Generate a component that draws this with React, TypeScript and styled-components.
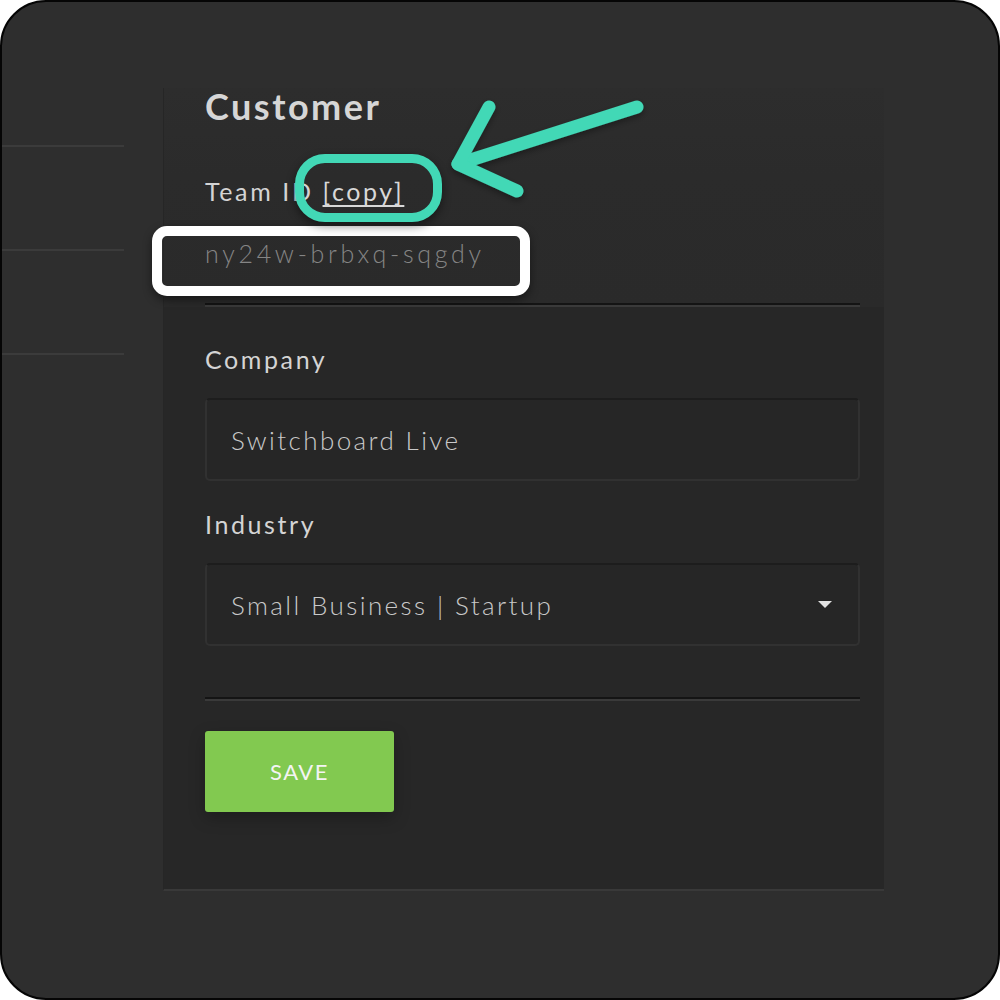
import React from "react";
import styled, { createGlobalStyle } from "styled-components";

const Global = createGlobalStyle`
  html, body { margin: 0; padding: 0; background: #ffffff; }
  body { font-family: Lato, "Open Sans", sans-serif; }
  * { box-sizing: border-box; }
`;

const Page = styled.div`
  position: relative;
  width: 1000px;
  height: 1000px;
  background: #ffffff;
  overflow: hidden;
`;

const Frame = styled.div`
  width: 1000px;
  height: 1000px;
  border: 2px solid #050505;
  border-radius: 46px;
  background: #2e2e2e;
  overflow: hidden;
  display: flex;
  align-items: flex-start;
`;

const Sidebar = styled.nav`
  width: 122px;
  flex: none;
  padding-top: 143px;
  display: flex;
  flex-direction: column;
`;

const SideItem = styled.div`
  height: 104px;
  border-top: 2px solid #3b3b3b;
`;

const Panel = styled.section`
  width: 721px;
  margin-left: 39px;
  margin-top: 86px;
  flex: none;
  display: flex;
  flex-direction: column;
  border-left: 1px solid #262626;
  border-bottom: 2px solid #393939;
`;

const PanelHead = styled.div`
  background: linear-gradient(180deg, #2d2d2d 0%, #2b2b2b 40%, #2a2a2a 100%);
  padding: 0 24px 0 41px;
  display: flex;
  flex-direction: column;
`;

const PanelBody = styled.div`
  background: #272727;
  padding: 40px 24px 77px 41px;
  display: flex;
  flex-direction: column;
`;

const Heading = styled.h1`
  margin: 0;
  font-family: Lato, sans-serif;
  font-weight: 700;
  font-size: 36px;
  line-height: 36px;
  letter-spacing: 2.5px;
  color: #d6d6d6;
`;

const Label = styled.label<{ $top: number }>`
  display: block;
  margin-top: ${(p) => p.$top}px;
  font-family: Lato, sans-serif;
  font-weight: 400;
  font-size: 25px;
  line-height: 25px;
  letter-spacing: 2.6px;
  color: #d4d4d4;
`;

const CopyLink = styled.a`
  color: #d8d8d8;
  text-decoration: underline;
  text-underline-offset: 4px;
  text-decoration-thickness: 2px;
  cursor: pointer;
`;

const IdValue = styled.div`
  margin-top: 37px;
  font-family: Lato, sans-serif;
  font-weight: 300;
  font-size: 25px;
  line-height: 25px;
  letter-spacing: 3.7px;
  color: #858585;
`;

const Divider = styled.hr<{ $top: number }>`
  margin: ${(p) => p.$top}px 0 0 0;
  border: none;
  height: 4px;
  border-top: 2px solid #141414;
  border-bottom: 2px solid #3a3a3a;
`;

const Field = styled.div`
  margin-top: 26px;
  height: 83px;
  display: flex;
  align-items: center;
  justify-content: space-between;
  padding: 0 26px 0 24px;
  background: #262626;
  border: 2px solid #313131;
  border-top-color: #1d1d1d;
  border-radius: 5px;
  font-family: Lato, sans-serif;
  font-weight: 300;
  font-size: 26px;
  line-height: 26px;
  letter-spacing: 2.4px;
  color: #c9c9c9;
`;

const Caret = styled.span`
  width: 0;
  height: 0;
  border-left: 7.5px solid transparent;
  border-right: 7.5px solid transparent;
  border-top: 7px solid #e2e2e2;
`;

const SaveButton = styled.button`
  margin-top: 30px;
  width: 189px;
  height: 81px;
  border: none;
  border-radius: 3px;
  background: #82c950;
  color: #f4f4f4;
  font-family: Lato, sans-serif;
  font-weight: 400;
  font-size: 22px;
  letter-spacing: 1.5px;
  box-shadow: 0 6px 16px rgba(0, 0, 0, 0.25);
  cursor: pointer;
`;

const Highlight = styled.div<{ $x: number; $y: number; $w: number; $h: number; $c: string; $bw: number; $r: number }>`
  position: absolute;
  left: ${(p) => p.$x}px;
  top: ${(p) => p.$y}px;
  width: ${(p) => p.$w}px;
  height: ${(p) => p.$h}px;
  border: ${(p) => p.$bw}px solid ${(p) => p.$c};
  border-radius: ${(p) => p.$r}px;
  box-shadow: 0 4px 10px rgba(0, 0, 0, 0.45);
  pointer-events: none;
`;

const ArrowSvg = styled.svg`
  position: absolute;
  left: 0;
  top: 0;
  width: 1000px;
  height: 1000px;
  pointer-events: none;
`;

export default function App() {
  return (
    <Page>
      <Global />
      <Frame>
        <Sidebar>
          <SideItem />
          <SideItem />
          <SideItem />
        </Sidebar>
        <Panel>
          <PanelHead>
            <Heading>Customer</Heading>
            <Label $top={55}>
              Team ID <CopyLink>[copy]</CopyLink>
            </Label>
            <IdValue>ny24w-brbxq-sqgdy</IdValue>
            <Divider $top={37} />
          </PanelHead>
          <PanelBody>
            <Label $top={0}>Company</Label>
            <Field>Switchboard Live</Field>
            <Label $top={31}>Industry</Label>
            <Field>
              <span>Small Business | Startup</span>
              <Caret />
            </Field>
            <Divider $top={51} />
            <SaveButton>SAVE</SaveButton>
          </PanelBody>
        </Panel>
      </Frame>
      <Highlight $x={152} $y={226} $w={378} $h={70} $c="#ffffff" $bw={10} $r={15} />
      <Highlight $x={295} $y={154} $w={147} $h={68} $c="#42d8b6" $bw={9} $r={30} />
      <ArrowSvg viewBox="0 0 1000 1000">
        <defs>
          <filter id="sh" x="-20%" y="-20%" width="140%" height="140%">
            <feDropShadow dx="0" dy="3" stdDeviation="3" floodColor="#000" floodOpacity="0.35" />
          </filter>
        </defs>
        <g
          fill="none"
          stroke="#42d8b6"
          strokeWidth={13}
          strokeLinecap="round"
          strokeLinejoin="round"
          filter="url(#sh)"
        >
          <path d="M637 107 L458 164" />
          <path d="M489 107 L458 164 L517 191" />
        </g>
      </ArrowSvg>
    </Page>
  );
}
